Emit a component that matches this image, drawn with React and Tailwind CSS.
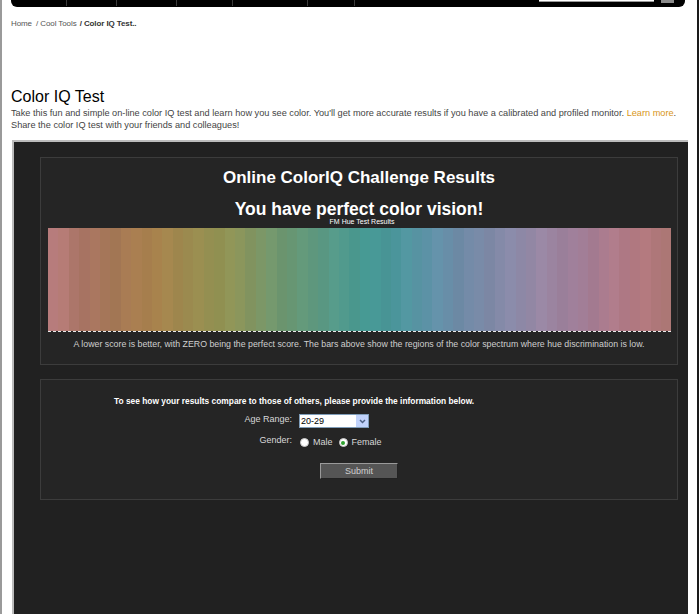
import React from "react";

const stops = [
  [0, [181, 123, 123]],
  [0.05, [170, 117, 100]],
  [0.1, [166, 120, 86]],
  [0.16, [168, 128, 76]],
  [0.22, [158, 140, 80]],
  [0.27, [146, 146, 82]],
  [0.31, [136, 148, 92]],
  [0.36, [114, 152, 110]],
  [0.41, [98, 152, 122]],
  [0.46, [84, 152, 136]],
  [0.51, [70, 154, 148]],
  [0.56, [76, 150, 156]],
  [0.61, [92, 146, 166]],
  [0.66, [110, 140, 168]],
  [0.71, [126, 138, 168]],
  [0.76, [140, 136, 166]],
  [0.81, [156, 134, 162]],
  [0.86, [160, 126, 152]],
  [0.91, [172, 122, 138]],
  [0.96, [178, 120, 126]],
  [1, [176, 122, 120]],
];

function colorAt(t) {
  for (let i = 0; i < stops.length - 1; i++) {
    const [p0, c0] = stops[i];
    const [p1, c1] = stops[i + 1];
    if (t >= p0 && t <= p1) {
      const f = (t - p0) / (p1 - p0);
      return c0.map((v, k) => v + (c1[k] - v) * f);
    }
  }
  return stops[stops.length - 1][1];
}

const bands = Array.from({ length: 60 }, (_, i) => {
  const c = colorAt(i / 59);
  const k = 1 + 0.018 * Math.sin(i * 1.9) + 0.01 * Math.cos(i * 0.7);
  return `rgb(${c.map((v) => Math.min(255, Math.round(v * k))).join(",")})`;
});

const navDividers = [66, 116, 176, 232, 307, 354];

function TopBar() {
  return (
    <div className="relative ml-[9px] mr-[12px] h-[7px] bg-black rounded-b-[6px]">
      {navDividers.map((x) => (
        <div key={x} className="absolute top-0 h-[6px] w-px bg-[#3a3a3a]" style={{ left: x - 11 }} />
      ))}
      <div className="absolute top-0 left-[528px] w-[115px] h-[2px] bg-white border-b border-[#999]" />
      <div className="absolute top-0 left-[650px] w-[13px] h-[3px] bg-[#8a8a8a]" />
    </div>
  );
}

function Spectrum() {
  return (
    <div className="mt-[2px] ml-[7px] mr-[6px] h-[104px] flex border-b border-dashed border-[#e8e8e8]">
      {bands.map((c, i) => (
        <div key={i} className="flex-1 h-full" style={{ backgroundColor: c }} />
      ))}
    </div>
  );
}

export default function App() {
  return (
    <div
      className="w-[699px] h-[614px] overflow-hidden bg-white border-l-2 border-l-[#9a9a9a] border-r-2 border-r-[#1a1a1a]"
      style={{ fontFamily: '"Liberation Sans", Arial, sans-serif' }}
    >
      <TopBar />

      <div className="pl-[9px] pt-[11px] text-[8px] leading-[11px] text-[#555] tracking-[-0.1px]">
        Home <span className="ml-[2px]">/ Cool Tools</span>{" "}
        <span className="ml-[1px] font-bold text-[#333]">/ Color IQ Test..</span>
      </div>

      <h1 className="pl-[9px] mt-[59px] text-[16px] leading-[18px] text-black">Color IQ Test</h1>
      <p className="pl-[9px] pr-[10px] mt-[1px] text-[9.2px] leading-[12px] text-[#444]">
        Take this fun and simple on-line color IQ test and learn how you see color. You'll get more accurate results if
        you have a calibrated and profiled monitor. <span className="text-[#d8961a]">Learn more</span>.
        <br />
        Share the color IQ test with your friends and colleagues!
      </p>

      <div className="ml-[10px] mr-[9px] mt-[9px] h-[480px] bg-[#212121] border-t-2 border-l-2 border-[#bcbcbc] pt-[15px] pl-[26px] pr-[10px]">
        <div className="bg-[#252525] border border-[#3c3c3c] pt-[9px] pb-[14px]">
          <div className="text-center text-white font-bold text-[17px] leading-[22px]">Online ColorIQ Challenge Results</div>
          <div className="mt-[9px] text-center text-white font-bold text-[17.5px] leading-[22px]">You have perfect color vision!</div>
          <div className="-mt-[2px] text-center text-white text-[7px] leading-[8px] pl-[6px]">FM Hue Test Results</div>
          <Spectrum />
          <div className="mt-[7px] text-center text-[#cfcfcf] text-[8.8px] leading-[11px]">
            A lower score is better, with ZERO being the perfect score. The bars above show the regions of the color
            spectrum where hue discrimination is low.
          </div>
        </div>

        <div className="mt-[14px] h-[121px] bg-[#252525] border border-[#3c3c3c] pt-[16px]">
          <div className="pl-[73px] text-white font-bold text-[8.4px] leading-[11px]">
            To see how your results compare to those of others, please provide the information below.
          </div>
          <div className="mt-[7px] flex items-center">
            <div className="w-[251px] text-right text-[#d8d8d8] text-[9px] -mt-[3px]">Age Range:</div>
            <div className="ml-[7px] w-[70px] h-[14px] bg-white border border-[#7f9db9] flex items-center">
              <span className="flex-1 pl-[1px] text-[9px] text-black leading-[12px]">20-29</span>
              <span className="w-[12px] h-[12px] bg-[#c1d3fb] flex items-center justify-center">
                <svg width="7" height="5" viewBox="0 0 7 5">
                  <path d="M1 1 L3.5 3.5 L6 1" fill="none" stroke="#4d6185" strokeWidth="1.5" />
                </svg>
              </span>
            </div>
          </div>
          <div className="mt-[8px] flex items-center">
            <div className="w-[251px] text-right text-[#d8d8d8] text-[9px] -mt-[4px]">Gender:</div>
            <div className="ml-[8px] flex items-center text-[#d8d8d8] text-[9px]">
              <span className="w-[9px] h-[9px] rounded-full bg-white border border-[#c8c8c8]" />
              <span className="ml-[4px]">Male</span>
              <span className="ml-[6px] w-[9px] h-[9px] rounded-full bg-white border border-[#c8c8c8] flex items-center justify-center">
                <span className="w-[4px] h-[4px] rounded-full bg-[#2fa12f]" />
              </span>
              <span className="ml-[4px]">Female</span>
            </div>
          </div>
          <div className="mt-[13px] ml-[279px] w-[78px] h-[16px] bg-[#555] border border-t-[#9a9a9a] border-l-[#9a9a9a] border-r-[#222] border-b-[#222] text-center text-[#d0d0d0] text-[9px] leading-[14px]">
            Submit
          </div>
        </div>
      </div>
    </div>
  );
}
